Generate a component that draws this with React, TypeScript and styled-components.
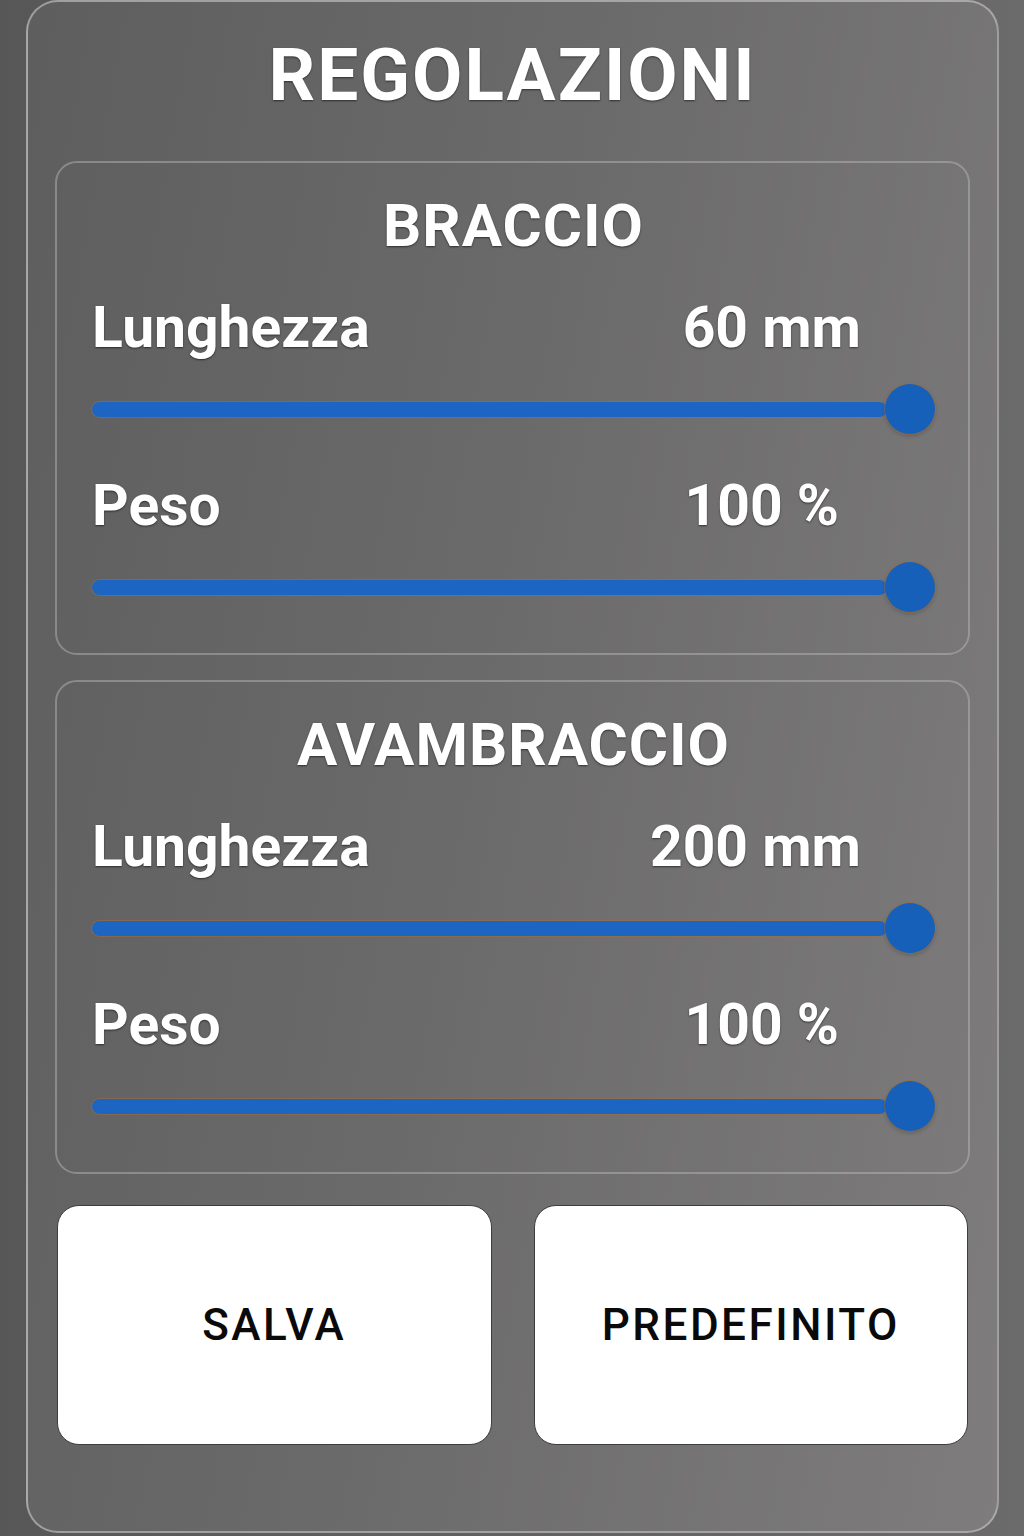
import React from "react";
import styled, { createGlobalStyle } from "styled-components";

const GlobalStyle = createGlobalStyle`
  html, body {
    margin: 0;
    padding: 0;
  }
  body {
    background: linear-gradient(90deg, #575757 0%, #5f5f5f 40%, #6b6b6b 100%);
    font-family: Roboto, "Noto Sans", "Liberation Sans", sans-serif;
    min-height: 1536px;
  }
`;

const Page = styled.div`
  padding: 0 25px 3px 26px;
  box-sizing: border-box;
  width: 1024px;
`;

const Panel = styled.main`
  box-sizing: border-box;
  height: 1533px;
  border: 2px solid rgba(200, 200, 200, 0.6);
  border-radius: 32px;
  background: linear-gradient(100deg, #5f5e5e 0%, #6b6a6a 45%, #7e7c7c 100%);
  padding: 37px 27px 0;
  display: flex;
  flex-direction: column;
`;

const Title = styled.h1`
  margin: 0;
  font-size: 73px;
  line-height: 1;
  font-weight: 700;
  letter-spacing: 2px;
  text-align: center;
  color: #ffffff;
  text-shadow: 0 1px 2px rgba(0, 0, 0, 0.55);
`;

const Sections = styled.div`
  margin-top: 49px;
  display: flex;
  flex-direction: column;
  gap: 25px;
`;

const Section = styled.section`
  border: 2px solid rgba(200, 200, 200, 0.4);
  border-radius: 22px;
  padding: 33px 33px 41px 35px;
  display: flex;
  flex-direction: column;
  gap: 43px;
`;

const SectionTitle = styled.h2`
  margin: 0;
  font-size: 60px;
  line-height: 1;
  font-weight: 700;
  letter-spacing: 1px;
  text-align: center;
  color: #ffffff;
  text-shadow: 0 1px 2px rgba(0, 0, 0, 0.55);
`;

const Control = styled.div`
  display: flex;
  flex-direction: column;
  gap: 27px;
`;

const LabelRow = styled.div<{ $inset: number }>`
  display: flex;
  justify-content: space-between;
  align-items: baseline;
  padding-right: ${(p) => p.$inset}px;
  font-size: 57px;
  line-height: 58px;
  font-weight: 700;
  color: #ffffff;
  text-shadow: 0 1px 2px rgba(0, 0, 0, 0.55);
`;

const Label = styled.span``;
const Value = styled.span``;

const Slider = styled.div`
  height: 50px;
  display: flex;
  align-items: center;
`;

const Track = styled.div`
  flex: 1;
  height: 15px;
  border-radius: 8px;
  background: #1d65c2;
  box-shadow: 0 0 0 1px rgba(170, 110, 50, 0.45);
`;

const Thumb = styled.div`
  width: 50px;
  height: 50px;
  margin-left: -2px;
  border-radius: 50%;
  background: #1660ba;
  box-shadow: 0 0 0 1px rgba(170, 110, 50, 0.45), 0 2px 4px rgba(0, 0, 0, 0.2);
`;

const Buttons = styled.div`
  margin-top: 31px;
  padding: 0 2px;
  display: grid;
  grid-template-columns: 1fr 1fr;
  gap: 42px;
`;

const Button = styled.button`
  height: 240px;
  background: #ffffff;
  border: 1px solid #3d3d3d;
  border-radius: 22px;
  font-family: Roboto, "Noto Sans", "Liberation Sans", sans-serif;
  font-size: 44px;
  font-weight: 500;
  letter-spacing: 2.5px;
  color: #0a0a0a;
  cursor: pointer;
`;

type Ctl = { label: string; value: string; inset: number };

const sections: { title: string; controls: Ctl[] }[] = [
  {
    title: "BRACCIO",
    controls: [
      { label: "Lunghezza", value: "60 mm", inset: 74 },
      { label: "Peso", value: "100 %", inset: 96 },
    ],
  },
  {
    title: "AVAMBRACCIO",
    controls: [
      { label: "Lunghezza", value: "200 mm", inset: 74 },
      { label: "Peso", value: "100 %", inset: 96 },
    ],
  },
];

export default function App() {
  return (
    <>
      <GlobalStyle />
      <Page>
        <Panel>
          <Title>REGOLAZIONI</Title>
          <Sections>
            {sections.map((s) => (
              <Section key={s.title}>
                <SectionTitle>{s.title}</SectionTitle>
                {s.controls.map((c) => (
                  <Control key={c.label}>
                    <LabelRow $inset={c.inset}>
                      <Label>{c.label}</Label>
                      <Value>{c.value}</Value>
                    </LabelRow>
                    <Slider>
                      <Track />
                      <Thumb />
                    </Slider>
                  </Control>
                ))}
              </Section>
            ))}
          </Sections>
          <Buttons>
            <Button>SALVA</Button>
            <Button>PREDEFINITO</Button>
          </Buttons>
        </Panel>
      </Page>
    </>
  );
}
